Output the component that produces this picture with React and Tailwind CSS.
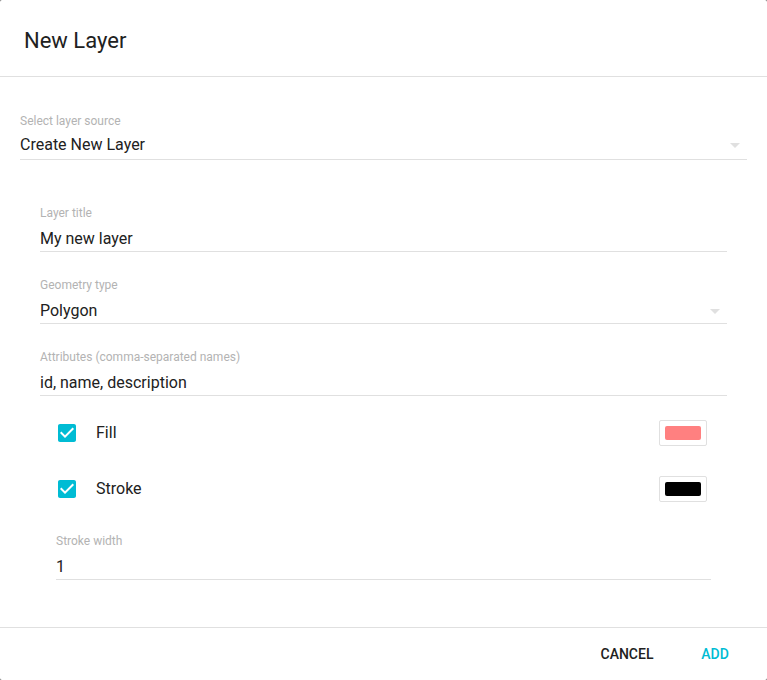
function DropArrow() {
  return (
    <svg viewBox="0 0 24 24" className="w-6 h-6 fill-[#e0e0e0]">
      <path d="M7 10l5 5 5-5z" />
    </svg>
  );
}

function Field({ label, value, select, tight, className = '' }) {
  return (
    <div className={`border-b border-[#e0e0e0] pt-[1px] ${tight ? 'pb-[2px]' : ''} ${className}`}>
      <div className="text-[12px] leading-[16px] text-[#b3b3b3]">{label}</div>
      <div className={`${tight ? 'mt-1' : 'mt-[6px]'} flex items-center justify-between`}>
        <span className="text-[16px] leading-[24px] text-[#212121]">{value}</span>
        {select && <DropArrow />}
      </div>
    </div>
  );
}

function CheckRow({ label, color }) {
  return (
    <div className="h-[56px] flex items-center pl-[15px] pr-5">
      <svg viewBox="0 0 24 24" className="w-6 h-6 fill-[#00bcd4]">
        <path d="M19 3H5c-1.11 0-2 .9-2 2v14c0 1.1.89 2 2 2h14c1.11 0 2-.9 2-2V5c0-1.1-.89-2-2-2zm-9 14l-5-5 1.41-1.41L10 14.17l7.59-7.59L19 8l-9 9z" />
      </svg>
      <span className="ml-[17px] text-[16px] leading-[24px] text-[#212121]">{label}</span>
      <div className="ml-auto w-[48px] h-[26px] border border-[#e0e0e0] rounded-[2px] flex items-center justify-center">
        <div className={`w-9 h-[14px] rounded-[2px] ${color}`} />
      </div>
    </div>
  );
}

export default function App() {
  return (
    <div className="bg-[#6b6b6b] w-[767px] h-[680px]" style={{ fontFamily: 'Roboto, "Noto Sans", sans-serif' }}>
      <div className="w-full h-full bg-white rounded-[2px] flex flex-col">
        <div className="h-[77px] border-b border-[#e0e0e0] px-6 pt-[25px]">
          <h1 className="text-[22px] leading-[32px] text-[#212121]">New Layer</h1>
        </div>

        <div className="flex-1 px-5 pt-[35px]">
          <Field label="Select layer source" value="Create New Layer" select tight />

          <div className="px-5 mt-[44px]">
            <Field label="Layer title" value="My new layer" />
            <Field label="Geometry type" value="Polygon" select className="mt-6" />
            <Field label="Attributes (comma-separated names)" value="id, name, description" className="mt-6" />

            <div className="mt-[9px]">
              <CheckRow label="Fill" color="bg-[#ff8080]" />
              <CheckRow label="Stroke" color="bg-black" />
            </div>

            <div className="px-4 mt-[15px]">
              <Field label="Stroke width" value="1" />
            </div>
          </div>
        </div>

        <div className="h-[53px] border-t border-[#e0e0e0] flex items-center justify-end pr-2">
          <button className="h-9 min-w-[88px] px-4 text-[14px] font-medium uppercase text-[#212121]">
            Cancel
          </button>
          <button className="h-9 min-w-[88px] px-4 text-[14px] font-medium uppercase text-[#00bcd4]">
            Add
          </button>
        </div>
      </div>
    </div>
  );
}
